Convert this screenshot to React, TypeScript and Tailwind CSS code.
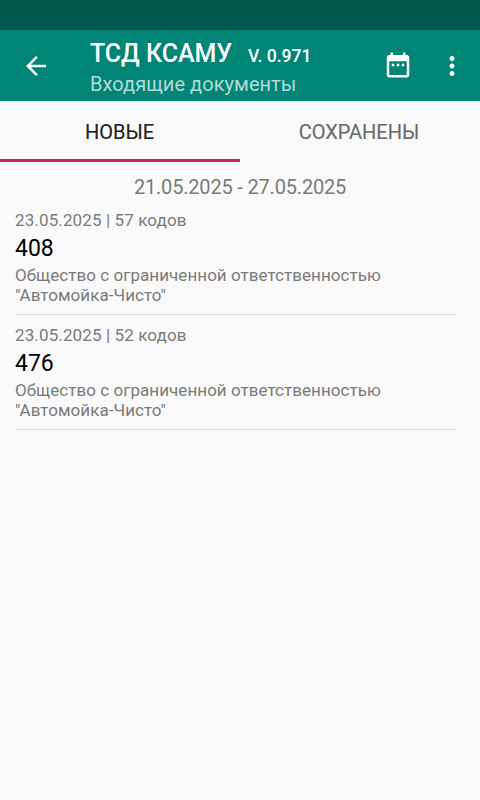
import React from "react";

const documents = [
  { number: "408", info: "23.05.2025 | 57 кодов" },
  { number: "476", info: "23.05.2025 | 52 кодов" },
];

export default function App() {
  return (
    <div className="flex h-[800px] w-[480px] flex-col overflow-hidden bg-[#fafafa] font-['Roboto',sans-serif] text-[#7a7a7a]">
      <div className="h-[30px] shrink-0 bg-[#00574b]" />
      <header className="flex h-[71px] shrink-0 items-center bg-[#008577] text-white shadow-[0_1px_2px_rgba(0,0,0,0.08)]">
        <button className="ml-[21px] h-[30px] w-[30px]" aria-label="Назад">
          <svg viewBox="0 0 24 24" className="h-[30px] w-[30px]" fill="currentColor">
            <path d="M20 11H7.83l5.59-5.59L12 4l-8 8 8 8 1.41-1.41L7.83 13H20v-2z" />
          </svg>
        </button>
        <div className="ml-[39px] flex-1 pt-[4px] whitespace-nowrap">
          <div className="flex items-baseline">
            <h1 className="text-[25px] leading-[32px] font-medium tracking-[-0.05px]">ТСД КСАМУ</h1>
            <span className="ml-4 text-[17.6px] leading-[32px] font-medium">V. 0.971</span>
          </div>
          <div className="-mt-px text-[20px] leading-[26px] tracking-[0.05px] text-[#b2dad6]">Входящие документы</div>
        </div>
        <svg viewBox="0 0 24 24" className="mb-px h-[30px] w-[30px]" fill="currentColor">
          <path d="M9 11H7v2h2v-2zm4 0h-2v2h2v-2zm4 0h-2v2h2v-2zm2-7h-1V2h-2v2H8V2H6v2H5c-1.11 0-1.99.9-1.99 2L3 20c0 1.1.89 2 2 2h14c1.1 0 2-.9 2-2V6c0-1.1-.9-2-2-2zm0 16H5V9h14v11z" />
        </svg>
        <svg viewBox="0 0 24 24" className="mr-[13px] ml-[24px] h-[30px] w-[30px]" fill="currentColor">
          <path d="M12 8c1.1 0 2-.9 2-2s-.9-2-2-2-2 .9-2 2 .9 2 2 2zm0 2c-1.1 0-2 .9-2 2s.9 2 2 2 2-.9 2-2-.9-2-2-2zm0 6c-1.1 0-2 .9-2 2s.9 2 2 2 2-.9 2-2-.9-2-2-2z" />
        </svg>
      </header>
      <nav className="grid h-[61px] shrink-0 grid-cols-2 pt-[5px] text-center text-[20px] leading-[53px] [-webkit-text-stroke:0.15px_currentColor]">
        <div className="border-b-3 border-[#c8235f] pr-px text-[#212121]">НОВЫЕ</div>
        <div className="pr-[2px] text-[#6b6b6b]">СОХРАНЕНЫ</div>
      </nav>
      <main>
        <div className="h-[38px] pt-[10px] text-center text-[20px] leading-[30px] tracking-[-0.18px]">21.05.2025 - 27.05.2025</div>
        {documents.map((doc) => (
          <article key={doc.number} className="mr-[23px] ml-[15px] h-[115px] border-b border-[#dadada] pt-[10px]">
            <div className="text-[17px] leading-[20px] tracking-[0.12px]">{doc.info}</div>
            <div className="h-[35px] pt-px text-[23px] leading-[36px] text-black">{doc.number}</div>
            <div className="text-[17px] leading-[20px] tracking-[0.05px]">
              Общество с ограниченной ответственностью<br />"Автомойка-Чисто"
            </div>
          </article>
        ))}
      </main>
    </div>
  );
}
